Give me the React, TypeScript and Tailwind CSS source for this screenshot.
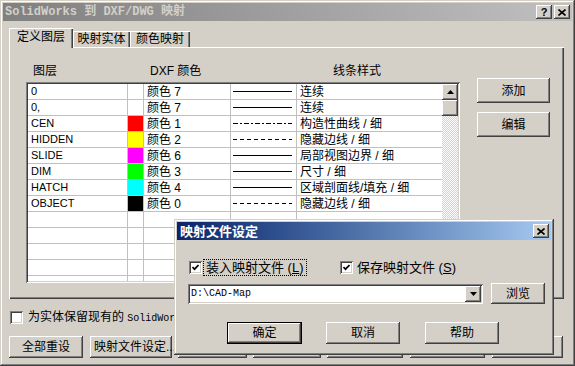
import React from "react";

const raised =
  "shadow-[inset_-1px_-1px_0_#404040,inset_1px_1px_0_#ffffff,inset_-2px_-2px_0_#808080,inset_2px_2px_0_#d4d0c8]";
const sunken =
  "shadow-[inset_1px_1px_0_#808080,inset_-1px_-1px_0_#ffffff,inset_2px_2px_0_#404040,inset_-2px_-2px_0_#d4d0c8]";
const frame =
  "shadow-[inset_-1px_-1px_0_#404040,inset_1px_1px_0_#d4d0c8,inset_-2px_-2px_0_#808080,inset_2px_2px_0_#ffffff]";
const mono = "font-['Liberation_Mono','Noto_Sans_CJK_SC',monospace]";

type Layer = {
  name: string;
  swatch: string | null;
  color: string;
  line: "solid" | "center" | "hidden";
  style: string;
};

const layers: Layer[] = [
  { name: "0", swatch: null, color: "颜色 7", line: "solid", style: "连续" },
  { name: "0,", swatch: null, color: "颜色 7", line: "solid", style: "连续" },
  { name: "CEN", swatch: "#ff0000", color: "颜色 1", line: "center", style: "构造性曲线 / 细" },
  { name: "HIDDEN", swatch: "#ffff00", color: "颜色 2", line: "hidden", style: "隐藏边线 / 细" },
  { name: "SLIDE", swatch: "#ff00ff", color: "颜色 6", line: "solid", style: "局部视图边界 / 细" },
  { name: "DIM", swatch: "#00ff00", color: "颜色 3", line: "solid", style: "尺寸 / 细" },
  { name: "HATCH", swatch: "#00ffff", color: "颜色 4", line: "solid", style: "区域剖面线/填充 / 细" },
  { name: "OBJECT", swatch: "#000000", color: "颜色 0", line: "hidden", style: "隐藏边线 / 细" },
];

function Btn({ children, className = "" }: { children?: React.ReactNode; className?: string }) {
  return (
    <div className={`flex shrink-0 items-center justify-center bg-[#d4d0c8] ${raised} ${className}`}>
      {children}
    </div>
  );
}

function Check({ checked }: { checked?: boolean }) {
  return (
    <div className={`flex h-[13px] w-[13px] shrink-0 items-center justify-center bg-white ${sunken}`}>
      {checked && (
        <svg width="7" height="7" viewBox="0 0 7 7">
          <path d="M0.5 3 L2.5 5.2 L6.5 1" stroke="#000" strokeWidth="1.7" fill="none" />
        </svg>
      )}
    </div>
  );
}

function CloseGlyph() {
  return (
    <svg width="8" height="7" viewBox="0 0 8 7">
      <path d="M0.5 0.5 L7.5 6.5 M7.5 0.5 L0.5 6.5" stroke="#000" strokeWidth="1.6" />
    </svg>
  );
}

function LineSample({ kind }: { kind: Layer["line"] }) {
  const dash = kind === "center" ? "5 2 2 2" : kind === "hidden" ? "4 3" : undefined;
  return (
    <svg width="65" height="15" viewBox="0 0 65 15">
      <line x1="2" y1="7.5" x2="61" y2="7.5" stroke="#000" strokeWidth="1" strokeDasharray={dash} />
    </svg>
  );
}

function Row({ layer }: { layer?: Layer }) {
  return (
    <div className="flex h-[16px] shrink-0">
      <div className="flex w-[100px] items-center border-r border-b border-[#c0c0c0] pl-[3px] text-[11px]">
        {layer?.name}
      </div>
      <div className="w-[16px] border-r border-b border-[#c0c0c0]">
        {layer?.swatch && <div className="h-full w-full" style={{ background: layer.swatch }} />}
      </div>
      <div className="flex w-[87px] items-center border-r border-b border-[#c0c0c0] pl-[3px]">{layer?.color}</div>
      <div className="flex w-[66px] items-center border-r border-b border-[#c0c0c0]">
        {layer && <LineSample kind={layer.line} />}
      </div>
      <div className="flex flex-1 items-center border-b border-[#c0c0c0] pl-[3px]">{layer?.style}</div>
    </div>
  );
}

export default function App() {
  const rows: (Layer | undefined)[] = [...layers, ...Array.from({ length: 5 }, () => undefined)];

  return (
    <div
      className={`relative flex h-[366px] w-[575px] flex-col overflow-hidden bg-[#d4d0c8] p-[3px] font-['Liberation_Sans','Noto_Sans_CJK_SC',sans-serif] text-[12px] leading-none text-black ${frame}`}
    >
      {/* Title bar */}
      <div className="flex h-[18px] shrink-0 items-center justify-between bg-linear-to-r from-[#808080] to-[#c0c0c0] pl-[2px] pr-[2px]">
        <span className={`${mono} text-[12px] font-bold text-[#d4d0c8]`}>SolidWorks 到 DXF/DWG 映射</span>
        <div className="flex gap-[2px]">
          <Btn className="h-[14px] w-[16px] text-[11px] font-bold">?</Btn>
          <Btn className="h-[14px] w-[16px]">
            <CloseGlyph />
          </Btn>
        </div>
      </div>

      {/* Tabs */}
      <div className="relative z-10 mt-[7px] ml-[6px] flex h-[19px] shrink-0 items-end">
        <div className="mb-[-1px] flex h-[20px] w-[64px] items-center justify-center bg-[#d4d0c8] pb-[2px] shadow-[inset_1px_1px_0_#ffffff,inset_-1px_0_0_#404040,inset_-2px_0_0_#808080]">
          定义图层
        </div>
        <div className="flex h-[16px] w-[57px] items-center justify-center shadow-[inset_1px_1px_0_#ffffff,inset_-1px_0_0_#404040,inset_-2px_0_0_#808080]">
          映射实体
        </div>
        <div className="flex h-[16px] w-[60px] items-center justify-center shadow-[inset_1px_1px_0_#ffffff,inset_-1px_0_0_#404040,inset_-2px_0_0_#808080]">
          颜色映射
        </div>
      </div>

      {/* Tab panel */}
      <div className="ml-[6px] flex h-[252px] w-[555px] shrink-0 shadow-[inset_1px_1px_0_#ffffff,inset_-1px_-1px_0_#404040,inset_-2px_-2px_0_#808080]">
        <div className="flex flex-col pt-[18px] pl-[17px]">
          <div className="flex h-[12px] items-center pl-[7px]">
            <span className="w-[117px]">图层</span>
            <span className="w-[183px]">DXF 颜色</span>
            <span>线条样式</span>
          </div>
          <div className={`mt-[5px] flex h-[201px] w-[434px] bg-white p-[2px] ${sunken}`}>
            <div className="flex flex-1 flex-col overflow-hidden">
              {rows.map((r, i) => (
                <Row key={i} layer={r} />
              ))}
            </div>
            <div className="flex w-[16px] flex-col">
              <Btn className="h-[16px] w-[16px]">
                <svg width="7" height="4" viewBox="0 0 7 4">
                  <polygon points="0,4 3.5,0 7,4" fill="#000" />
                </svg>
              </Btn>
              <Btn className="h-[16px] w-[16px]" />
              <div className="flex-1 bg-[image:repeating-conic-gradient(#d4d0c8_0_25%,#ffffff_0_50%)] bg-[length:2px_2px]" />
            </div>
          </div>
        </div>
        <div className="flex flex-col gap-[9px] pt-[31px] pl-[17px]">
          <Btn className="h-[25px] w-[73px]">添加</Btn>
          <Btn className="h-[25px] w-[73px]">编辑</Btn>
        </div>
      </div>

      {/* Keep existing checkbox */}
      <div className="mt-[12px] flex h-[13px] shrink-0 items-center pl-[7px]">
        <Check />
        <span className="ml-[5px] whitespace-nowrap">
          为实体保留现有的 <span className={`${mono} text-[10px]`}>SolidWorks</span> 图层和颜色
        </span>
      </div>

      {/* Bottom buttons */}
      <div className="mt-[12px] flex h-[22px] shrink-0 pl-[6px]">
        <Btn className="w-[74px]">全部重设</Btn>
        <Btn className="ml-[7px] w-[82px] justify-start pl-[4px] whitespace-nowrap">映射文件设定...</Btn>
        <Btn className="ml-[6px] w-[69px]">确定</Btn>
        <Btn className="ml-[6px] w-[68px]">取消</Btn>
        <Btn className="ml-[6px] w-[76px]">应用</Btn>
        <Btn className="ml-[7px] w-[75px]">帮助</Btn>
        <Btn className="ml-[7px] w-[71px]">关闭</Btn>
      </div>

      {/* Modal dialog */}
      <div className={`absolute top-[219px] left-[174px] z-20 flex h-[136px] w-[380px] flex-col bg-[#d4d0c8] p-[3px] ${frame}`}>
        <div className="flex h-[18px] shrink-0 items-center justify-between bg-linear-to-r from-[#0a246a] to-[#a6caf0] pr-[2px] pl-[3px]">
          <span className="text-[13px] font-bold text-white">映射文件设定</span>
          <Btn className="h-[14px] w-[16px]">
            <CloseGlyph />
          </Btn>
        </div>

        <div className="mt-[19px] flex h-[17px] shrink-0 items-center pl-[12px]">
          <div className="flex w-[151px] items-center">
            <Check checked />
            <span className="ml-[1px] flex h-[17px] items-center border border-dotted border-black px-[2px] text-[13px]">
              装入映射文件 (<u>L</u>)
            </span>
          </div>
          <Check checked />
          <span className="ml-[4px] text-[13px]">
            保存映射文件 (<u>S</u>)
          </span>
        </div>

        <div className="mt-[7px] flex shrink-0 items-center pl-[11px]">
          <div className={`flex h-[20px] w-[295px] items-center bg-white p-[2px] ${sunken}`}>
            <span className={`${mono} flex-1 pl-[1px] text-[10px]`}>D:\CAD-Map</span>
            <Btn className="h-[16px] w-[16px]">
              <svg width="7" height="4" viewBox="0 0 7 4">
                <polygon points="0,0 7,0 3.5,4" fill="#000" />
              </svg>
            </Btn>
          </div>
          <Btn className="ml-[8px] h-[21px] w-[54px]">浏览</Btn>
        </div>

        <div className="mt-[18px] flex h-[22px] shrink-0 pl-[50px]">
          <div className="flex w-[75px] border border-black">
            <Btn className="flex-1">确定</Btn>
          </div>
          <Btn className="ml-[24px] w-[74px]">取消</Btn>
          <Btn className="ml-[25px] w-[74px]">帮助</Btn>
        </div>
      </div>
    </div>
  );
}
